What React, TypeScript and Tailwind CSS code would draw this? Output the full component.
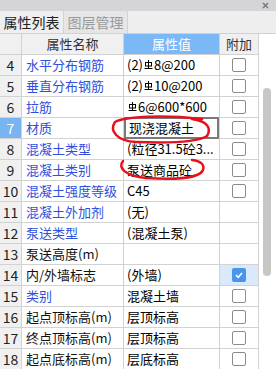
import React from 'react';

type Row = {
  no: number;
  name: string;
  blue: boolean;
  value: React.ReactNode;
  check: 'none' | 'off' | 'on';
};

// small rebar grade symbol drawn as svg
const Rebar: React.FC = () => (
  <svg width="9" height="10" viewBox="0 0 9 10" className="inline-block align-top mt-[0px] mx-[1px]">
    <rect x="1.5" y="2.5" width="6" height="3.5" fill="none" stroke="#000" strokeWidth="1" />
    <line x1="4.5" y1="0" x2="4.5" y2="8.5" stroke="#000" strokeWidth="1" />
    <line x1="0.5" y1="8.5" x2="8.5" y2="8.5" stroke="#000" strokeWidth="1" />
  </svg>
);

const rows: Row[] = [
  { no: 4, name: '水平分布钢筋', blue: true, value: <>(2)<Rebar />8@200</>, check: 'off' },
  { no: 5, name: '垂直分布钢筋', blue: true, value: <>(2)<Rebar />10@200</>, check: 'off' },
  { no: 6, name: '拉筋', blue: true, value: <><Rebar />6@600*600</>, check: 'off' },
  { no: 7, name: '材质', blue: true, value: '现浇混凝土', check: 'off' },
  { no: 8, name: '混凝土类型', blue: true, value: '(粒径31.5砼3...', check: 'off' },
  { no: 9, name: '混凝土类别', blue: true, value: '泵送商品砼', check: 'off' },
  { no: 10, name: '混凝土强度等级', blue: true, value: 'C45', check: 'off' },
  { no: 11, name: '混凝土外加剂', blue: true, value: '(无)', check: 'none' },
  { no: 12, name: '泵送类型', blue: true, value: '(混凝土泵)', check: 'none' },
  { no: 13, name: '泵送高度(m)', blue: false, value: '', check: 'none' },
  { no: 14, name: '内/外墙标志', blue: false, value: '(外墙)', check: 'on' },
  { no: 15, name: '类别', blue: true, value: '混凝土墙', check: 'off' },
  { no: 16, name: '起点顶标高(m)', blue: false, value: '层顶标高', check: 'off' },
  { no: 17, name: '终点顶标高(m)', blue: false, value: '层顶标高', check: 'off' },
  { no: 18, name: '起点底标高(m)', blue: false, value: '层底标高', check: 'off' },
];

const CheckBox: React.FC<{ on: boolean }> = ({ on }) =>
  on ? (
    <div className="w-[14px] h-[14px] rounded-[2px] bg-[#4a94ea] flex items-center justify-center">
      <svg width="10" height="10" viewBox="0 0 10 10">
        <path d="M2 5.2 L4.2 7.3 L8 3" fill="none" stroke="#fff" strokeWidth="1.6" />
      </svg>
    </div>
  ) : (
    <div className="w-[14px] h-[14px] rounded-[2px] border border-[#8c8c8c] bg-white" />
  );

export default function App() {
  return (
    <div
      className="relative w-[276px] h-[369px] overflow-hidden bg-white text-[13px] text-black"
      style={{ fontFamily: '"Noto Sans CJK SC", "Noto Sans", sans-serif' }}
    >
      {/* title strip */}
      <div className="h-[11px] bg-[#d5d5d9] flex items-center justify-end pr-[7px]">
        <svg width="7" height="7" viewBox="0 0 7 7">
          <path d="M1 1 L6 6 M6 1 L1 6" stroke="#7a7a7a" strokeWidth="1.6" />
        </svg>
      </div>

      {/* tabs */}
      <div className="h-[23px] bg-[#eeeeee] flex border-b border-[#d2d2d2]">
        <div className="w-[64px] flex items-center justify-center text-[14px] text-[#222] border-r border-[#d2d2d2] bg-[#efefef]">
          属性列表
        </div>
        <div className="w-[64px] flex items-center justify-center text-[14px] text-[#9a9a9a] border-r border-[#d2d2d2] bg-[#e6e6e6]">
          图层管理
        </div>
      </div>

      <div className="flex">
        <div className="w-[259px] border-r border-[#d2d2d2]">
          {/* header */}
          <div className="flex h-[21px] border-b border-[#d2d2d2] bg-[#f0f0f0]">
            <div className="w-[22px] border-r border-[#d2d2d2]" />
            <div className="w-[102px] border-r border-[#d2d2d2] flex items-center justify-center text-[#333]">
              属性名称
            </div>
            <div className="w-[95px] bg-[#7ab8f6] flex items-center justify-center text-white">
              属性值
            </div>
            <div className="flex-1 border-l border-[#d2d2d2] flex items-center justify-center text-[#333]">
              附加
            </div>
          </div>

          {rows.map((r) => {
            const sel = r.no === 7;
            return (
              <div key={r.no} className="flex h-[21px] border-b border-[#d2d2d2]">
                <div
                  className={`w-[22px] border-r border-[#d2d2d2] flex items-center justify-center text-[14px] ${
                    sel ? 'bg-[#78b4f0] text-white' : 'bg-[#f0f0f0] text-[#222]'
                  }`}
                >
                  {r.no}
                </div>
                <div
                  className={`w-[102px] border-r border-[#d2d2d2] flex items-center pl-[4px] whitespace-nowrap overflow-hidden ${
                    r.blue ? 'text-[#2f4fdc]' : 'text-[#111]'
                  }`}
                >
                  {r.name}
                </div>
                <div
                  className={`w-[95px] flex items-center pl-[3px] whitespace-nowrap overflow-hidden ${
                    sel ? 'border-2 border-[#7a7a7a] -my-[1px] pl-[2px]' : ''
                  }`}
                >
                  {r.value}
                </div>
                <div
                  className={`flex-1 border-l border-[#d2d2d2] flex items-center justify-center ${
                    r.check === 'on' ? 'bg-[#d8eafb]' : ''
                  }`}
                >
                  {r.check !== 'none' && <CheckBox on={r.check === 'on'} />}
                </div>
              </div>
            );
          })}
        </div>

        {/* scrollbar */}
        <div className="w-[17px] pl-[4px] pt-[54px] bg-white">
          <div className="w-[8px] h-[188px] rounded-full bg-[#c6c6c6]" />
        </div>
      </div>

      {/* hand drawn red marks */}
      <svg className="absolute left-0 top-0 pointer-events-none" width="276" height="369">
        <path
          d="M202 119 C165 115 126 116 115 122 C109 131 117 141 136 142 C162 143 196 143 207 136 C212 128 207 121 192 119"
          fill="none"
          stroke="#e8101c"
          strokeWidth="2.5"
          strokeLinecap="round"
        />
        <path
          d="M123 161 C117 168 126 176 146 178 C176 180 200 178 203 170 C205 164 200 161 192 160"
          fill="none"
          stroke="#e8101c"
          strokeWidth="2.5"
          strokeLinecap="round"
        />
      </svg>
    </div>
  );
}
